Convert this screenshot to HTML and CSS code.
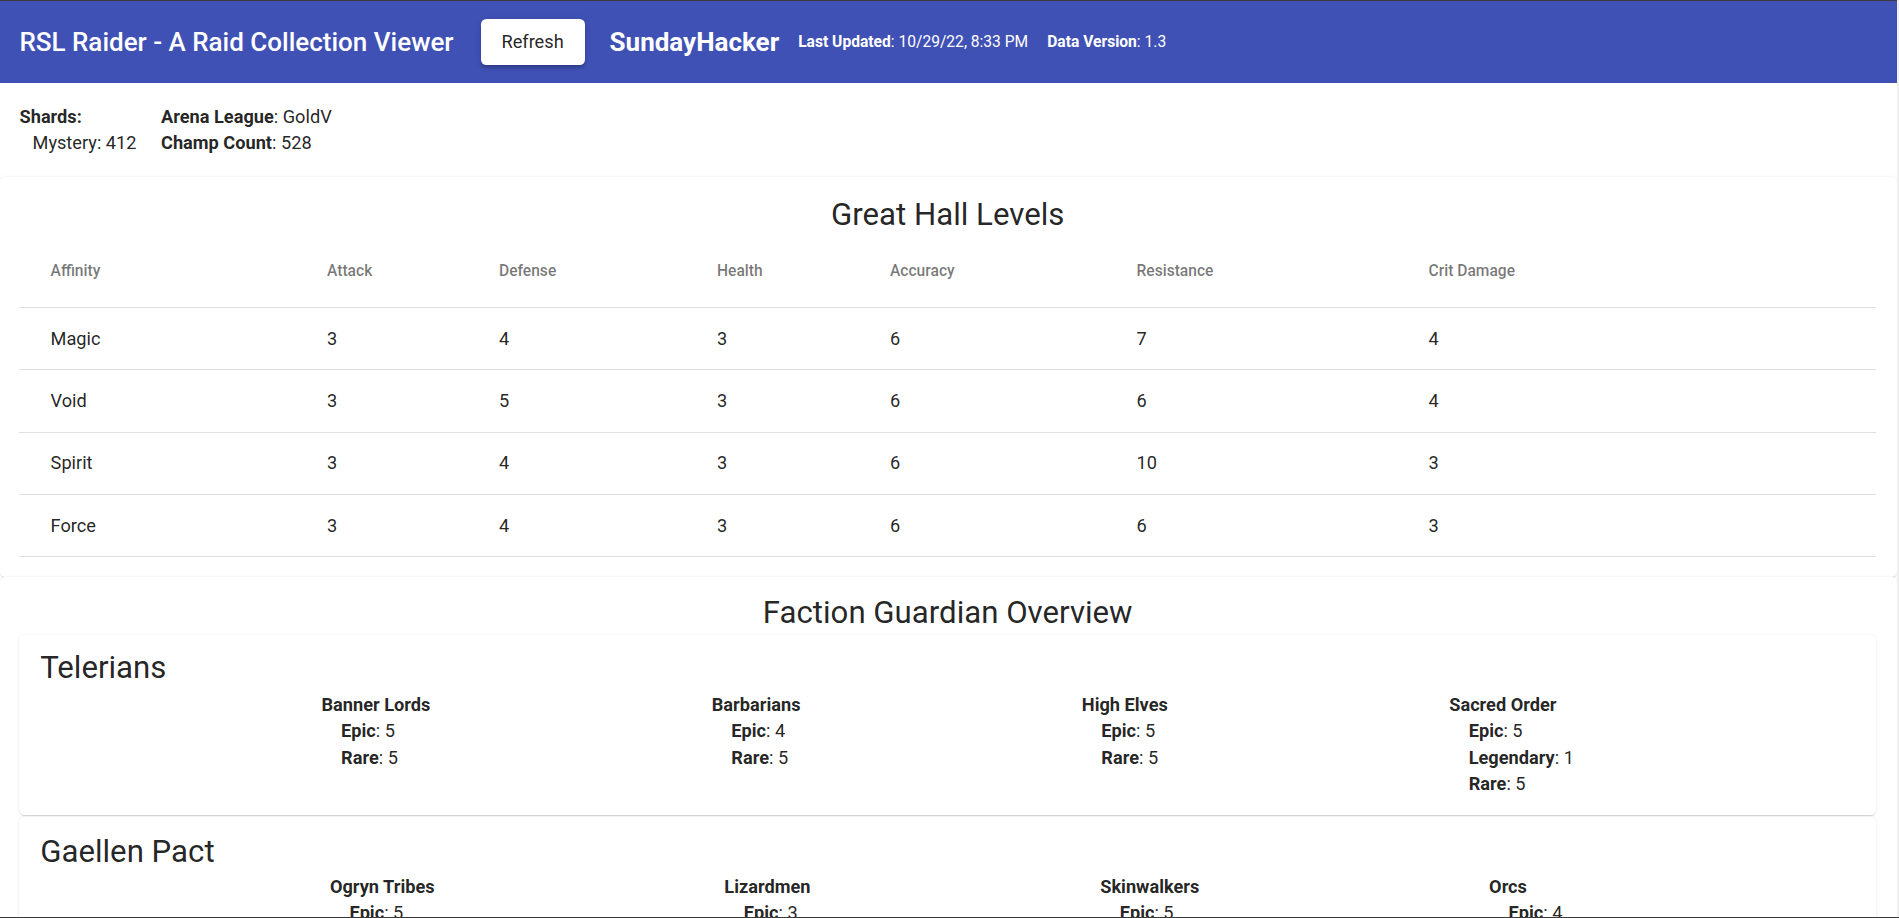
FILE: index.html
```html
<!DOCTYPE html>
<html lang="en">
<head>
<meta charset="utf-8">
<title>RSL Raider - A Raid Collection Viewer</title>
<link rel="stylesheet" href="styles.css">
</head>
<body>
<header class="toolbar">
  <h1 class="app-title">RSL Raider - A Raid Collection Viewer</h1>
  <button class="refresh" type="button">Refresh</button>
  <span class="brand">SundayHacker</span>
  <span class="meta meta-first"><b>Last Updated</b>: 10/29/22, 8:33 PM</span>
  <span class="meta"><b>Data Version</b>: 1.3</span>
</header>

<section class="summary">
  <div class="shards">
    <div><b>Shards:</b></div>
    <div class="shard-item">Mystery: 412</div>
  </div>
  <div class="account">
    <div><b>Arena League</b>: GoldV</div>
    <div><b>Champ Count</b>: 528</div>
  </div>
</section>

<section class="card section hall-section">
  <h2 class="section-title">Great Hall Levels</h2>
  <div class="hall-table" role="table">
    <div class="hall-row hall-head" role="row">
      <div role="columnheader">Affinity</div>
      <div role="columnheader">Attack</div>
      <div role="columnheader">Defense</div>
      <div role="columnheader">Health</div>
      <div role="columnheader">Accuracy</div>
      <div role="columnheader">Resistance</div>
      <div role="columnheader">Crit Damage</div>
    </div>
    <div class="hall-row" role="row">
      <div role="cell">Magic</div><div role="cell">3</div><div role="cell">4</div><div role="cell">3</div><div role="cell">6</div><div role="cell">7</div><div role="cell">4</div>
    </div>
    <div class="hall-row" role="row">
      <div role="cell">Void</div><div role="cell">3</div><div role="cell">5</div><div role="cell">3</div><div role="cell">6</div><div role="cell">6</div><div role="cell">4</div>
    </div>
    <div class="hall-row" role="row">
      <div role="cell">Spirit</div><div role="cell">3</div><div role="cell">4</div><div role="cell">3</div><div role="cell">6</div><div role="cell">10</div><div role="cell">3</div>
    </div>
    <div class="hall-row" role="row">
      <div role="cell">Force</div><div role="cell">3</div><div role="cell">4</div><div role="cell">3</div><div role="cell">6</div><div role="cell">6</div><div role="cell">3</div>
    </div>
  </div>
</section>

<section class="card section">
  <h2 class="section-title overview-title">Faction Guardian Overview</h2>

  <div class="card faction">
    <h3 class="faction-title">Telerians</h3>
    <div class="groups">
      <div class="group">
        <div class="group-name">Banner Lords</div>
        <ul><li><b>Epic</b>: 5</li><li><b>Rare</b>: 5</li></ul>
      </div>
      <div class="group">
        <div class="group-name">Barbarians</div>
        <ul><li><b>Epic</b>: 4</li><li><b>Rare</b>: 5</li></ul>
      </div>
      <div class="group">
        <div class="group-name">High Elves</div>
        <ul><li><b>Epic</b>: 5</li><li><b>Rare</b>: 5</li></ul>
      </div>
      <div class="group">
        <div class="group-name">Sacred Order</div>
        <ul><li><b>Epic</b>: 5</li><li><b>Legendary</b>: 1</li><li><b>Rare</b>: 5</li></ul>
      </div>
    </div>
  </div>

  <div class="card faction faction-next">
    <h3 class="faction-title">Gaellen Pact</h3>
    <div class="groups">
      <div class="group">
        <div class="group-name">Ogryn Tribes</div>
        <ul><li><b>Epic</b>: 5</li><li><b>Rare</b>: 5</li></ul>
      </div>
      <div class="group">
        <div class="group-name">Lizardmen</div>
        <ul><li><b>Epic</b>: 3</li><li><b>Rare</b>: 5</li></ul>
      </div>
      <div class="group">
        <div class="group-name">Skinwalkers</div>
        <ul><li><b>Epic</b>: 5</li><li><b>Rare</b>: 5</li></ul>
      </div>
      <div class="group">
        <div class="group-name">Orcs</div>
        <ul><li><b>Epic</b>: 4</li><li><b>Rare</b>: 5</li></ul>
      </div>
    </div>
  </div>
</section>

<div class="frame-bottom"></div>
</body>
</html>
```

FILE: styles.css
```css
html {
  background: #efefef;
  scrollbar-width: none;
}

body {
  margin: 0 2px 0 0;
  background: #ffffff;
  font-family: Roboto, "Helvetica Neue", Arial, sans-serif;
  font-size: 18.2px;
  line-height: 26px;
  color: rgba(0, 0, 0, 0.87);
}

b {
  font-weight: 700;
}

/* ---------- toolbar ---------- */
.toolbar {
  display: flex;
  align-items: center;
  height: 82px;
  padding: 0 20.8px 0 19.4px;
  border-top: 1px solid #3b3b3b;
  background: #3f51b5;
  color: #ffffff;
  white-space: nowrap;
}

.app-title {
  margin: 0;
  font-size: 26px;
  font-weight: 500;
  line-height: 32px;
}

.refresh {
  margin-left: 27px;
  height: 46.8px;
  width: 104px;
  padding: 0;
  border: 0;
  border-radius: 5.2px;
  background: #ffffff;
  color: rgba(0, 0, 0, 0.87);
  font-family: Roboto, Arial, sans-serif;
  font-size: 18.2px;
  font-weight: 400;
  box-shadow: 0 2.6px 1.3px -2.6px rgba(0, 0, 0, 0.2),
              0 2.6px 2.6px 0 rgba(0, 0, 0, 0.14),
              0 1.3px 6.5px 0 rgba(0, 0, 0, 0.12);
}

.brand {
  margin-left: 25px;
  font-size: 26px;
  font-weight: 700;
  line-height: 32px;
}

.meta {
  margin-left: 19px;
  font-size: 15.6px;
  line-height: 20px;
}

/* ---------- summary ---------- */
.summary {
  display: flex;
  padding: 21px 19.5px;
}

.shards {
  width: 141.5px;
}

.shard-item {
  padding-left: 13px;
}

/* ---------- cards ---------- */
.card {
  background: #ffffff;
  border-radius: 5.2px;
  box-shadow: 0 1.3px 1px -1px rgba(0, 0, 0, 0.1),
              0 1px 1px 0 rgba(0, 0, 0, 0.05),
              0 0 3px 0 rgba(0, 0, 0, 0.09);
}

.section {
  padding: 15px 21px 20.8px 19.4px;
}

.hall-section {
  padding-top: 16.5px;
  padding-bottom: 19.3px;
}

.section-title {
  margin: 0;
  font-size: 31.2px;
  font-weight: 400;
  line-height: 41.6px;
  text-align: center;
}

.overview-title {
  margin-bottom: 1.4px;
}

/* ---------- great hall table ---------- */
.hall-row {
  display: grid;
  grid-template-columns: 307.6px 172px 218px 173px 246.5px 292px 1fr;
  align-items: center;
  box-sizing: border-box;
  height: 62.4px;
  border-bottom: 1px solid #e0e0e0;
}

.hall-row > div:first-child {
  padding-left: 31.2px;
}

.hall-row > div:last-child {
  padding-right: 31.2px;
}

.hall-head {
  height: 72.8px;
  font-size: 15.6px;
  font-weight: 500;
  color: rgba(0, 0, 0, 0.54);
}

/* ---------- factions ---------- */
.faction {
  padding: 12.5px 20.8px 17px;
}

.faction-next {
  margin-top: 2px;
  padding-top: 14.5px;
}

.faction-next .faction-title {
  margin-bottom: 1px;
}

.faction-title {
  margin: 0 0 3px;
  font-size: 31.2px;
  font-weight: 400;
  line-height: 41.6px;
}

.groups {
  display: flex;
  justify-content: space-evenly;
  line-height: 26.5px;
}

.group-name {
  font-weight: 700;
}

.group ul {
  margin: 0;
  padding: 0 0 0 19.5px;
  list-style: none;
}

/* browser frame line at the bottom edge of the capture */
.frame-bottom {
  position: fixed;
  left: 0;
  right: 0;
  bottom: 0;
  height: 1px;
  background: #3b3b3b;
}
```
